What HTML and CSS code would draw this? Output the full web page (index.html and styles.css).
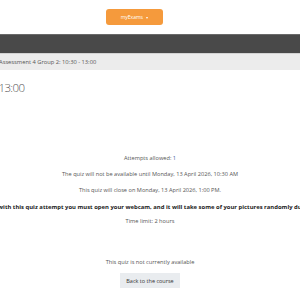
FILE: index.html
```html
<!DOCTYPE html>
<html lang="en">
<head>
    <meta charset="UTF-8">
    <meta name="viewport" content="width=device-width, initial-scale=1.0">
    <title>Assessment 4 Group 2: 10:30 - 13:00</title>
    <link rel="stylesheet" href="styles.css">
</head>
<body>
    <div class="topbar">
        <button class="exams-btn">myExams <span class="caret"></span></button>
    </div>
    <div class="navbar"></div>
    <div class="breadcrumb">
        <span class="crumb">Assessment 4 Group 2: 10:30 - 13:00</span>
    </div>
    <h2 class="page-title">Assessment 4 Group 2: 10:30 - 13:00</h2>

    <div class="quizinfo">
        <p>Attempts allowed: <span class="num">1</span></p>
        <p>The quiz will not be available until Monday, 13 April 2026, 10:30 AM</p>
        <p>This quiz will close on Monday, 13 April 2026, 1:00 PM.</p>
        <div class="notice">
            <strong>Please note, with this quiz attempt you must open your webcam, and it will take some of your pictures randomly during the exam.</strong>
        </div>
        <p>Time limit: 2 hours</p>
    </div>

    <div class="quizstatus">
        <p>This quiz is not currently available</p>
        <button class="back-btn">Back to the course</button>
    </div>
</body>
</html>
```

FILE: styles.css
```css
body {
    font-family: "Open Sans", "Noto Sans", sans-serif;
    background-color: #fff;
    margin: 0;
    padding: 0;
    color: #555;
    overflow: hidden;
}
.topbar {
    height: 34px;
    display: flex;
    justify-content: center;
    align-items: flex-start;
}
.exams-btn {
    margin-top: 9px;
    margin-right: 31px;
    width: 57px;
    height: 16px;
    padding: 0;
    background-color: #f59a3c;
    color: #fff;
    border: none;
    border-radius: 3px;
    font-family: inherit;
    font-size: 5px;
}
.caret {
    display: inline-block;
    width: 0;
    height: 0;
    margin-left: 2px;
    vertical-align: middle;
    border-left: 1.5px solid transparent;
    border-right: 1.5px solid transparent;
    border-top: 2px solid #fff;
}
.navbar {
    height: 18px;
    background-color: #494949;
    border-top: 1px solid #6a6a6a;
}
.breadcrumb {
    height: 16px;
    background-color: #ececec;
    border-top: 1px solid #d2d2d2;
    display: flex;
    align-items: center;
    font-size: 5.75px;
    color: #555;
}
.crumb {
    white-space: nowrap;
    margin-left: -1px;
}
.page-title {
    margin: 11px 0 0 -145px;
    font-size: 11.5px;
    font-weight: 300;
    letter-spacing: -0.6px;
    color: #555;
    white-space: nowrap;
    line-height: 14px;
}
.quizinfo {
    margin-top: 59px;
    text-align: center;
    font-size: 5.65px;
}
.quizinfo p, .quizstatus p {
    margin: 0 0 8px 0;
    line-height: 8px;
}
.num {
    color: #3d5f9e;
}
.notice {
    display: flex;
    justify-content: center;
    white-space: nowrap;
    color: #222;
    font-size: 5.9px;
    margin: 9px 0 6px 0;
    padding-left: 5px;
    line-height: 8px;
}
.quizstatus {
    margin-top: 33px;
    text-align: center;
    font-size: 5.65px;
}
.quizstatus p {
    margin-bottom: 7px;
}
.back-btn {
    width: 60px;
    height: 15px;
    padding: 0;
    background-color: #e9ecef;
    color: #333;
    border: none;
    border-radius: 0;
    font-family: inherit;
    font-size: 5.5px;
}
```
